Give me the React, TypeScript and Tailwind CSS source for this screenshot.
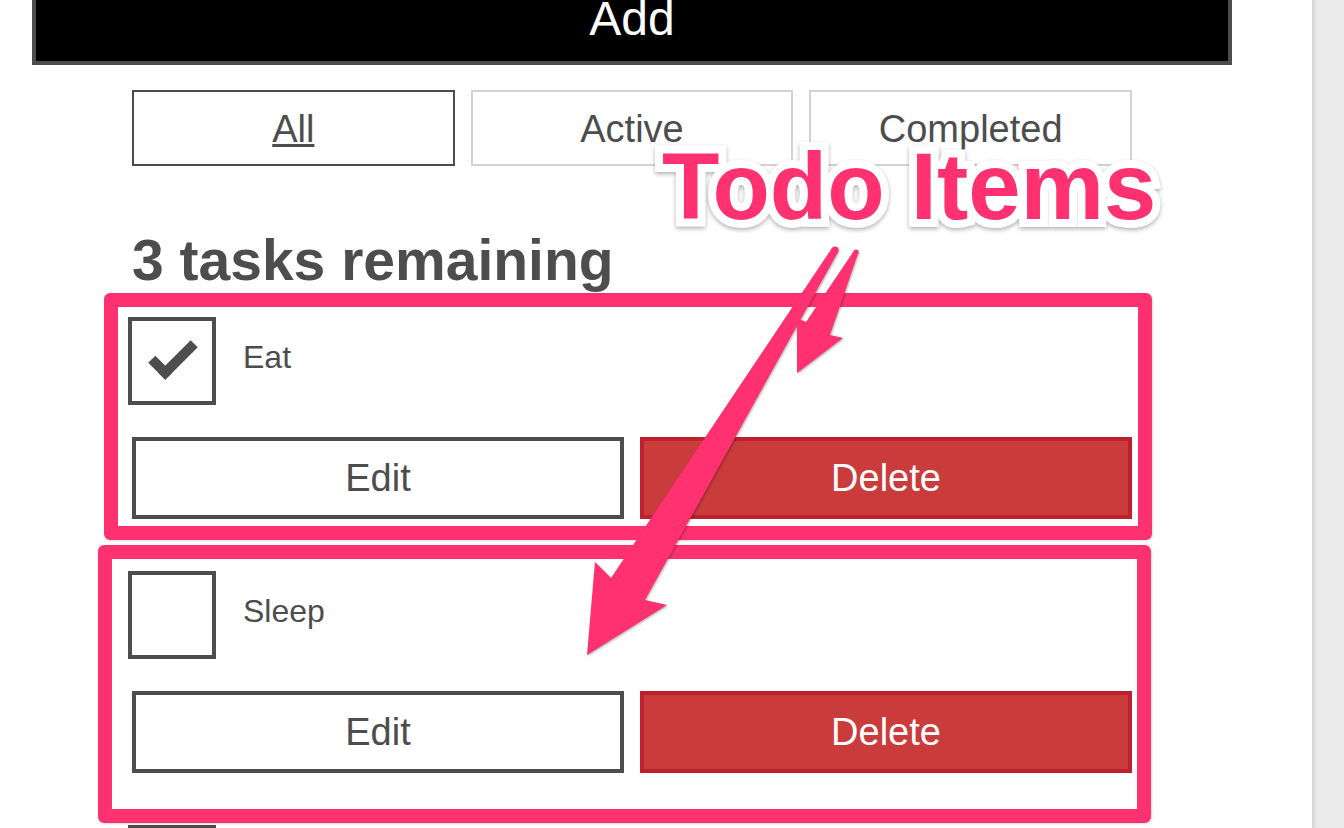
import React from 'react';

type Todo = { id: string; name: string; completed: boolean };

const todos: Todo[] = [
  { id: 'todo-0', name: 'Eat', completed: true },
  { id: 'todo-1', name: 'Sleep', completed: false },
];

const filters = [
  { name: 'All', pressed: true },
  { name: 'Active', pressed: false },
  { name: 'Completed', pressed: false },
];

function Checkbox({ checked }: { checked: boolean }) {
  return (
    <div className="relative -ml-[4px] -mt-[4px] h-[88px] w-[88px] shrink-0 border-4 border-[#4d4d4d]">
      {checked && (
        <span className="absolute left-[18px] top-[22px] box-content h-[14px] w-[36px] -rotate-45 border-b-[10px] border-l-[10px] border-[#4d4d4d]" />
      )}
    </div>
  );
}

function TodoItem({ todo, first }: { todo: Todo; first: boolean }) {
  return (
    <li className={first ? 'mt-[25px]' : 'mt-[56px]'}>
      <div className="flex h-[88px] items-start">
        <Checkbox checked={todo.completed} />
        <label className="ml-[27px] pt-[16px] text-[32px] leading-[40px]">{todo.name}</label>
      </div>
      <div className="mt-[28px] flex gap-4">
        <button className="flex h-[82px] flex-1 items-center justify-center border-4 border-[#4d4d4d] bg-white text-[38px]">
          Edit
        </button>
        <button className="flex h-[82px] flex-1 items-center justify-center border-4 border-[#bd2130] bg-[#ca3c3c] text-[38px] text-white">
          Delete
        </button>
      </div>
    </li>
  );
}

export default function App() {
  return (
    <div className="flex h-[828px] w-[1344px] overflow-hidden font-['Liberation_Sans',Arial,sans-serif] text-[#4d4d4d]">
      <div className="relative h-[828px] w-[1312px] shrink-0 overflow-hidden bg-white">
        <button className="ml-[32px] flex h-[65px] w-[1200px] items-start justify-center border-x-4 border-b-4 border-[#4d4d4d] bg-black text-[48px] text-white">
          <span className="-mt-[5px] leading-[48px]">Add</span>
        </button>

        <div className="ml-[132px] w-[1000px]">
          <div className="mt-[25px] flex gap-4">
            {filters.map((f) => (
              <button
                key={f.name}
                className={
                  f.pressed
                    ? 'flex h-[76px] flex-1 items-center justify-center border-2 border-[#4d4d4d] bg-white pt-[3px] text-[38px] underline'
                    : 'flex h-[76px] flex-1 items-center justify-center border-2 border-[#d3d3d3] bg-white pt-[3px] text-[38px]'
                }
              >
                {f.name}
              </button>
            ))}
          </div>

          <h2 className="mt-[58px] text-[57px] font-bold leading-[72px]">3 tasks remaining</h2>

          <ul>
            {todos.map((t, i) => (
              <TodoItem key={t.id} todo={t} first={i === 0} />
            ))}
            {/* next item, only its checkbox edge shows */}
            <li className="mt-[56px] flex h-[88px] items-start">
              <Checkbox checked={false} />
            </li>
          </ul>
        </div>

        {/* annotation boxes */}
        <div className="absolute left-[104px] top-[293px] h-[247px] w-[1048px] rounded-[6px] border-[14px] border-[#ff3170] shadow-[1px_1px_2px_rgba(0,0,0,0.15)]" />
        <div className="absolute left-[98px] top-[545px] h-[278px] w-[1053px] rounded-[6px] border-[14px] border-[#ff3170] shadow-[1px_1px_2px_rgba(0,0,0,0.15)]" />

        <span className="absolute left-[662px] top-[140px] whitespace-nowrap text-[94px] font-bold leading-[94px] text-[#ff3170] [-webkit-text-stroke:16px_#fff] [paint-order:stroke_fill] drop-shadow-[0_2px_2px_rgba(0,0,0,0.3)]">
          Todo Items
        </span>

        <svg
          className="pointer-events-none absolute left-0 top-0 drop-shadow-[1px_1px_1px_rgba(0,0,0,0.3)]"
          width="1312"
          height="828"
          viewBox="0 0 1312 828"
        >
          <g fill="#ff3170">
            <polygon points="853.8,250.9 806,322 797,318 797,373 843,338 830,335 858.2,253.1" />
            <circle cx="856" cy="252" r="2.5" />
            <polygon points="832,248 611,578 595,562 587,655 667,605 645,600 838,252" />
            <circle cx="835" cy="250" r="3.5" />
          </g>
        </svg>
      </div>
      <div className="h-[828px] flex-1 bg-[#ebebeb] shadow-[inset_5px_0_4px_-3px_rgba(0,0,0,0.12)]" />
    </div>
  );
}
